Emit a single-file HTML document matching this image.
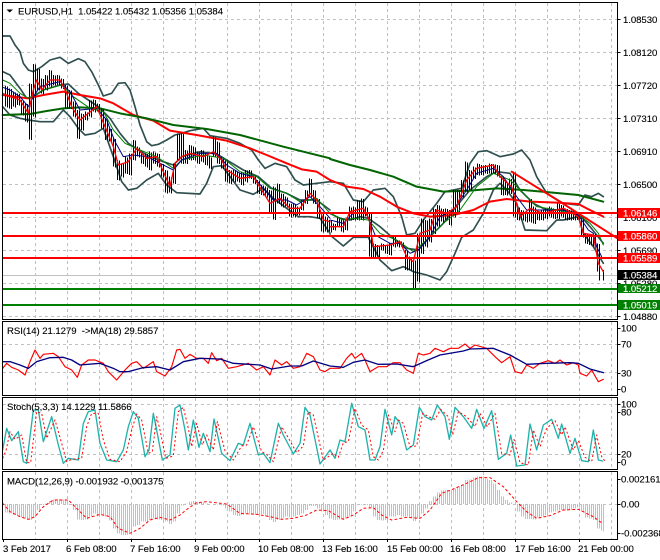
<!DOCTYPE html>
<html><head><meta charset="utf-8"><style>
html,body{margin:0;padding:0;background:#fff}
svg{display:block}
text{font-family:"Liberation Sans",sans-serif;font-size:9.6px;letter-spacing:-.06px;fill:#000;stroke:#000;stroke-width:.12px}
.g{stroke:#c0c0c0;stroke-width:1;stroke-dasharray:3 3;fill:none}
.f{fill:none;stroke-linejoin:round;stroke-linecap:round}
.bb{stroke:#2f4f4f;stroke-width:5}
.rt{stroke:#f00;stroke-width:6}
.gt{stroke:#006400;stroke-width:6}
.r1{stroke:#f00;stroke-width:4}
.n1{stroke:#000080;stroke-width:3}
.g1{stroke:#008000;stroke-width:3}
.bar{stroke:#000;stroke-width:3;fill:none;shape-rendering:crispEdges}
.hi{stroke:#c0c0c0;stroke-width:3;fill:none;shape-rendering:crispEdges}
text.w{fill:#fff;stroke:#fff}
</style></head><body>
<svg width="660" height="560" viewBox="0 0 660 560" xmlns="http://www.w3.org/2000/svg">
<rect width="660" height="560" fill="#fff"/>
<path class="g" d="M35.5 3V319M67.5 3V319M99.5 3V319M131.5 3V319M163.5 3V319M195.5 3V319M227.5 3V319M259.5 3V319M291.5 3V319M323.5 3V319M355.5 3V319M387.5 3V319M419.5 3V319M451.5 3V319M483.5 3V319M515.5 3V319M547.5 3V319M579.5 3V319M611.5 3V319"/>
<path class="g" d="M35.5 322V395M67.5 322V395M99.5 322V395M131.5 322V395M163.5 322V395M195.5 322V395M227.5 322V395M259.5 322V395M291.5 322V395M323.5 322V395M355.5 322V395M387.5 322V395M419.5 322V395M451.5 322V395M483.5 322V395M515.5 322V395M547.5 322V395M579.5 322V395M611.5 322V395"/>
<path class="g" d="M35.5 398V469M67.5 398V469M99.5 398V469M131.5 398V469M163.5 398V469M195.5 398V469M227.5 398V469M259.5 398V469M291.5 398V469M323.5 398V469M355.5 398V469M387.5 398V469M419.5 398V469M451.5 398V469M483.5 398V469M515.5 398V469M547.5 398V469M579.5 398V469M611.5 398V469"/>
<path class="g" d="M35.5 472V539M67.5 472V539M99.5 472V539M131.5 472V539M163.5 472V539M195.5 472V539M227.5 472V539M259.5 472V539M291.5 472V539M323.5 472V539M355.5 472V539M387.5 472V539M419.5 472V539M451.5 472V539M483.5 472V539M515.5 472V539M547.5 472V539M579.5 472V539M611.5 472V539"/>
<path class="g" d="M3 19.5H617M3 52.5H617M3 85.5H617M3 118.5H617M3 151.5H617M3 184.5H617M3 217.5H617M3 250.5H617M3 283.5H617M3 316.5H617M3 344.5H617M3 372.5H617M3 404.5H617M3 454.5H617M3 504.5H617"/>
<path d="M3 275.5H617" stroke="#c0c0c0" stroke-width="1"/>

<g transform="scale(.3333333333)">
<g class="f">
<path class="bb" d="M8 108L30 108L45 135L60 155L70 190L85 210L100 215L125 200L150 180L180 172L205 190L235 176L255 185L275 215L295 255L310 288L335 280L355 250L375 248L390 270L405 320L420 375L440 425L455 437L475 433L500 420L525 405L545 400L570 392L610 385L630 407L680 415L720 430L755 450L775 480L795 505L825 490L860 500L885 540L910 555L950 550L990 545"/>
<path class="bb" d="M8 215L30 225L60 265L80 295L100 290L130 270L180 255L205 252L235 280L265 300L295 320L330 355L360 400L385 430L415 450L450 470L490 485L520 495L545 470L600 455L650 462L680 480L730 510L775 530L815 565L860 580L900 600L950 600L990 630"/>
<path class="bb" d="M8 320L30 345L60 355L85 360L120 365L160 365L190 330L210 350L235 385L255 405L285 400L310 385L340 470L365 545L385 570L410 565L440 540L475 520L500 555L530 578L600 582L620 550L640 500L665 497L690 530L720 570L760 583L790 565L820 595L860 625L895 650L930 650L960 655L990 700"/>
<path class="rt" d="M8 285L60 292L85 295L130 285L190 275L240 285L300 295L340 310L400 345L460 362L510 392L590 405L680 422L750 445L800 465L860 490L905 508L950 515L990 540"/>
<path class="gt" d="M8 345L90 342L140 333L190 325L240 322L300 325L360 340L440 355L520 375L620 387L720 405L850 440L990 475"/>
</g>
<path id="b1" class="bar" d="M16 258V320M28 265V325M40 275V320M52 280V315M64 300V345M76 310V365M88 250V418M100 192V350M112 205V270M124 235V280M136 225V270M148 210V260M160 225V255M172 225V255M184 235V265M196 255V325M208 270V325M220 305V350M232 330V415M244 340V390M256 335V360M268 300V350M280 298V335M292 310V335M304 325V385M316 355V420M328 385V425M340 415V500M352 480V540M364 490V530M376 470V520M388 460V525M400 420V480M412 440V470M424 460V490M436 460V500M448 455V510M460 455V490M472 460V500M484 490V530M496 510V578M508 530V578M520 490V550M532 400V480M544 400V490M556 450V490M568 435V480M580 440V480M592 455V490M604 450V485M616 460V495M628 470V505M640 410V470M652 425V490M664 470V505M676 480V545M688 510V550M700 510V545M712 515V545M724 515V555M736 510V545M748 510V535M760 525V550M772 540V580M784 555V585M796 560V590M808 570V640M820 560V658M832 550V610M844 580V620M856 590V620M868 610V650M880 610V650M892 620V645M904 600V630M916 570V610M928 535V590M940 570V610M952 595V655M964 640V695M976 650V695"/>
<use href="#b1" transform="translate(6,2)"/>
<g class="f">
<path class="g1" d="M8 240L30 250L60 280L85 295L130 270L185 255L220 290L270 325L310 335L340 390L375 430L420 450L470 470L520 505L545 480L610 465L670 475L720 515L770 530L810 565L860 580L900 605L950 595L990 640"/>
<path class="n1" d="M8 262L30 270L60 290L85 320L100 290L120 260L180 245L210 275L240 330L290 325L320 360L345 425L370 470L400 465L440 470L480 490L520 510L545 480L600 460L650 460L680 495L720 520L760 530L790 565L820 600L860 600L890 615L930 590L960 620L990 655"/>
<path class="r1" d="M8 280L30 290L60 300L85 340L100 270L110 240L125 270L150 240L180 240L200 280L215 320L240 360L265 340L290 320L315 380L340 440L355 495L385 485L410 445L440 475L470 470L490 515L510 560L525 490L545 470L570 460L610 470L640 455L665 480L680 510L720 535L760 530L785 570L810 610L840 595L870 625L900 625L930 580L950 600L970 660L990 665"/>
</g>
<g transform="translate(990,0)">
<g class="f">
<path class="bb" d="M0 545L40 550L70 600L100 605L130 570L165 565L190 590L215 650L230 705L255 700L280 660L320 610L345 575L395 565L420 490L445 455L470 452L510 470L550 462L575 450L600 480L620 530L650 580L700 610L745 615L765 585L785 590L805 580L820 590"/>
<path class="bb" d="M0 640L30 655L60 660L90 650L115 655L150 680L190 715L230 745L265 750L300 710L340 670L370 630L420 570L470 530L500 515L540 520L570 570L610 610L650 630L700 630L745 640L780 680L820 730"/>
<path class="bb" d="M0 705L40 738L70 712L115 712L150 780L185 812L220 800L250 815L290 825L330 840L350 815L375 760L395 712L430 690L460 640L490 570L510 550L530 570L560 610L585 690L650 692L680 660L700 660L745 650L760 700L790 740L820 790"/>
<path class="rt" d="M0 540L50 560L100 567L150 590L200 620L250 640L300 650L370 645L430 630L480 605L530 597L600 605L680 608L745 612L770 625L820 650"/>
<path class="gt" d="M0 477L60 495L120 510L190 530L260 560L340 575L420 572L500 565L580 570L660 577L745 585L820 605"/>
</g>
<path id="b2" class="bar" d="M-2 660V695M10 670V690M22 650V680M34 655V695M46 660V690M58 620V660M70 620V660M82 600V660M94 595V660M106 620V650M118 640V770M130 730V772M142 735V770M154 730V750M166 735V760M178 730V765M190 705V740M202 720V740M214 725V740M226 750V810M238 770V810M250 780V868M262 700V845M274 655V760M286 660V740M298 655V725M310 625V700M322 615V680M334 625V665M346 625V660M358 630V675M370 570V650M382 570V640M394 540V590M406 485V575M418 510V570M430 500V535M442 490V525M454 495V525M466 495V520M478 490V520M490 492V520M502 495V530M514 530V585M526 545V585M538 535V580M550 515V650M562 620V660M574 630V660M586 640V665M598 595V665M610 620V670M622 635V660M634 630V660M646 625V655M658 620V650M670 625V655M682 610V655M694 615V650M706 625V660M718 630V660M730 635V660M742 640V660M754 650V710M766 700V730M778 705V735M790 700V740M802 730V815"/>
<use href="#b2" transform="translate(6,2)"/>
<path class="bar" d="M808 790V842M820 810V842"/>
<g class="f">
<path class="g1" d="M0 640L40 660L70 655L115 660L150 700L200 720L250 755L290 720L340 670L390 630L440 560L490 520L540 540L570 570L620 620L680 630L745 645L780 670L805 700L820 735"/>
<path class="n1" d="M0 660L40 670L70 640L110 640L135 705L180 730L210 730L240 760L265 750L300 710L330 650L370 630L410 570L440 520L490 505L520 530L560 590L590 630L650 630L700 630L745 645L775 690L790 700L800 740L815 770"/>
<path class="r1" d="M0 680L40 680L60 635L100 625L118 660L130 740L180 735L210 725L230 770L250 785L270 700L300 690L320 630L350 640L380 620L410 540L440 505L490 495L510 530L545 560L570 650L600 625L640 640L700 625L745 650L760 700L790 705L805 790L820 815"/>
<path class="rt" d="M545 515L690 605L862 715"/>
</g>
</g>
</g>

<path d="M3 213H617M3 236H617M3 258H617" stroke="#f00" stroke-width="2"/>
<path d="M3 289H617M3 305H617" stroke="#008000" stroke-width="2"/>

<!-- RSI -->
<g transform="translate(0,320) scale(.3333333333)">
<g class="f">
<path stroke="#f00" stroke-width="3.5" d="M8 145L20 130L35 142L55 150L75 165L90 125L105 90L120 115L130 103L160 100L175 110L195 140L215 150L232 172L245 135L265 120L285 120L310 130L325 155L350 180L375 150L395 130L410 125L430 145L460 125L470 155L495 168L515 140L530 90L540 88L555 115L570 103L590 115L610 115L625 130L635 98L650 122L665 115L685 145L710 140L745 130L770 150L790 140L810 165L825 120L845 135L860 125L880 145L900 140L920 100L940 110L960 150L975 155L990 145L1020 145L1040 115L1055 100L1065 115L1085 100L1095 120L1110 155L1135 140L1160 140L1180 128L1200 128L1220 150L1240 160L1255 100L1270 105L1290 100L1305 85L1330 95L1350 85L1375 85L1395 72L1410 85L1425 75L1460 85L1485 110L1505 128L1530 110L1545 155L1565 160L1580 135L1600 145L1620 130L1645 122L1665 130L1680 120L1700 135L1720 128L1735 135L1740 160L1760 168L1775 150L1795 185L1810 178"/>
<path stroke="#000080" stroke-width="4" d="M8 125L30 125L60 135L85 145L110 125L150 113L190 112L215 120L240 135L300 130L340 145L360 155L385 155L430 143L470 140L510 150L550 125L600 115L660 117L700 130L780 135L815 147L870 138L905 138L940 123L990 138L1030 142L1060 127L1095 120L1135 133L1190 132L1240 140L1280 122L1320 105L1390 93L1410 87L1480 85L1530 105L1580 133L1640 130L1710 128L1735 130L1770 147L1810 158"/>
</g>
</g>

<!-- Stoch -->
<g transform="translate(0,320) scale(.3333333333)">
<g class="f">
<path stroke="#20b2aa" stroke-width="4" d="M8 390L20 325L35 362L55 335L70 425L80 430L100 270L115 270L130 365L155 290L175 375L190 430L205 415L235 420L250 310L265 275L285 270L300 370L320 420L350 425L370 390L385 320L400 275L415 295L435 410L447 390L460 280L470 330L487 420L510 405L525 265L540 255L555 330L565 390L580 300L597 382L610 340L630 395L642 297L665 400L690 422L715 370L730 375L750 310L775 405L790 400L810 428L835 310L850 345L880 402L900 370L915 262L930 285L960 432L990 390L1005 415L1020 360L1035 365L1055 250L1075 320L1095 330L1110 420L1125 420L1140 380L1155 268L1175 345L1185 290L1200 310L1220 390L1240 375L1258 262L1275 290L1295 300L1312 255L1335 290L1348 358L1365 262L1390 290L1415 325L1430 268L1452 325L1475 272L1495 418L1520 400L1532 345L1550 438L1575 435L1590 312L1610 390L1630 315L1655 298L1675 355L1685 312L1710 400L1725 355L1745 422L1765 425L1780 330L1795 420L1808 423"/>
<path stroke="#f00" stroke-width="3" stroke-dasharray="6 7" stroke-linecap="butt" d="M8 415L18 392L30 335L45 358L65 345L80 428L92 428L110 275L125 280L140 355L165 300L185 370L200 425L215 418L245 415L260 320L275 280L295 280L310 360L330 418L360 425L380 395L395 330L410 282L425 300L445 400L457 395L470 290L480 330L497 415L520 408L535 275L550 262L565 325L575 380L590 310L607 375L620 345L640 390L652 305L675 392L700 420L725 378L740 375L760 320L785 395L800 403L820 425L845 320L860 345L890 398L910 378L925 275L940 285L970 420L1000 400L1015 412L1030 368L1045 365L1065 265L1085 315L1105 330L1120 410L1135 420L1150 392L1165 285L1185 335L1195 300L1210 310L1230 380L1250 378L1268 280L1285 290L1305 298L1322 268L1345 290L1358 345L1375 275L1400 290L1425 320L1440 280L1462 320L1485 280L1505 400L1530 405L1542 358L1560 428L1585 435L1600 330L1620 380L1640 325L1665 302L1685 345L1695 320L1720 390L1735 362L1755 412L1775 425L1790 345L1805 410L1816 425"/>
</g>
</g>

<!-- MACD -->
<g transform="translate(0,320) scale(.3333333333)">
<path id="h1" class="hi" d="M16 552V578M28 552V580M40 552V585M52 552V588M64 552V592M76 552V596M88 552V600M100 552V590M112 552V570M124 552V555M136 552V550M148 552V543M160 552V538M172 552V537M184 552V538M196 552V540M220 552V570M232 552V598M244 552V600M256 552V598M268 552V590M280 552V580M292 552V590M304 552V585M316 552V590M328 552V602M340 552V625M352 552V640M364 552V645M376 552V645M388 552V638M400 552V620M412 552V615M424 552V605M436 552V605M448 552V600M460 552V595M472 552V598M484 552V600M496 552V605M508 552V612M520 552V605M532 552V580M544 552V556M556 552V550M568 552V545M580 552V543M592 552V546M604 552V548M616 552V550M652 552V553M664 552V556M676 552V565M688 552V575M700 552V585M712 552V588M724 552V585M736 552V580M748 552V583M760 552V585M772 552V583M784 552V582M796 552V590M808 552V600M820 552V606M832 552V600M844 552V595M856 552V590M868 552V592M880 552V590M892 552V585M904 552V580M916 552V570M928 552V558M940 552V558M952 552V565M964 552V575M976 552V585M988 552V595"/>
<use href="#h1" transform="translate(6,0)"/>
<g transform="translate(990,0)">
<path id="h2" class="hi" d="M10 552V600M22 552V598M34 552V598M46 552V595M58 552V590M70 552V575M82 552V555M94 552V553M106 552V555M118 552V562M130 552V590M142 552V600M154 552V602M166 552V600M178 552V590M190 552V590M202 552V585M214 552V590M226 552V590M238 552V592M250 552V603M262 552V595M274 552V580M286 552V565M298 552V543M310 552V530M322 552V518M334 552V512M346 552V510M358 552V510M370 552V505M382 552V500M394 552V495M406 552V480M418 552V478M430 552V472M442 552V470M454 552V470M466 552V475M478 552V480M490 552V490M502 552V510M514 552V530M526 552V540M538 552V548M562 552V575M574 552V590M586 552V597M598 552V597M610 552V598M622 552V592M634 552V590M646 552V585M658 552V578M670 552V575M682 552V572M694 552V570M706 552V572M718 552V570M730 552V565M742 552V562M754 552V575M766 552V592M778 552V595M790 552V600M802 552V625"/>
<use href="#h2" transform="translate(6,0)"/>
<path class="hi" d="M814 552V632M820 552V634"/>
</g>
<path class="f" stroke="#f00" stroke-width="3" stroke-dasharray="6 9" stroke-linecap="butt" d="M8 550L30 575L60 590L85 598L105 590L130 560L160 540L205 540L230 565L260 595L300 583L330 590L355 625L390 640L420 625L450 600L480 592L510 600L540 585L565 565L590 548L620 545L680 552L720 580L770 583L810 590L845 598L880 595L920 585L950 570L985 572L1030 598L1060 585L1090 565L1120 563L1145 585L1175 600L1220 592L1260 595L1290 570L1325 520L1360 507L1400 490L1435 473L1470 473L1510 500L1550 545L1580 575L1610 595L1650 587L1690 570L1735 568L1780 590L1810 612"/>
</g>

<!-- frames -->
<g fill="none" stroke="#000" stroke-width="1">
<rect x="2.5" y="2.5" width="615" height="317"/>
<rect x="2.5" y="321.5" width="615" height="74"/>
<rect x="2.5" y="397.5" width="615" height="72"/>
<rect x="2.5" y="471.5" width="615" height="68"/>
</g>
<path stroke="#000" stroke-width="1" d="M617.5 19.5h3M617.5 52.5h3M617.5 85.5h3M617.5 118.5h3M617.5 151.5h3M617.5 184.5h3M617.5 217.5h3M617.5 250.5h3M617.5 283.5h3M617.5 316.5h3M617.5 328.5h3M617.5 344.5h3M617.5 373.5h3M617.5 389.5h3M617.5 404.5h3M617.5 412.5h3M617.5 454.5h3M617.5 462.5h3M617.5 479.5h3M617.5 504.5h3M617.5 533.5h3M3.5 539v3M67.5 539v3M131.5 539v3M195.5 539v3M259.5 539v3M323.5 539v3M387.5 539v3M451.5 539v3M515.5 539v3M579.5 539v3"/>

<!-- title -->
<path d="M6.5 9.5H13L9.7 12.5Z" fill="#000"/>
<text x="18" y="14.5" xml:space="preserve">EURUSD,H1  1.05422 1.05432 1.05356 1.05384</text>
<text x="7" y="334" xml:space="preserve">RSI(14) 21.1279  -&gt;MA(18) 29.5857</text>
<text x="7" y="410">Stoch(5,3,3) 14.1229 11.5866</text>
<text x="7" y="484.5">MACD(12,26,9) -0.001932 -0.001375</text>

<!-- price labels -->
<text x="623" y="23">1.08530</text>
<text x="623" y="56">1.08120</text>
<text x="623" y="89">1.07720</text>
<text x="623" y="122">1.07310</text>
<text x="623" y="155">1.06910</text>
<text x="623" y="188">1.06500</text>
<text x="623" y="221">1.06100</text>
<text x="623" y="254">1.05690</text>
<text x="623" y="287">1.05280</text>
<text x="623" y="320">1.04880</text>

<rect x="618" y="208" width="42" height="10" fill="#f00"/><text class="w" x="623" y="216.5">1.06146</text>
<rect x="618" y="231" width="42" height="10" fill="#f00"/><text class="w" x="623" y="239.5">1.05860</text>
<rect x="618" y="253" width="42" height="10" fill="#f00"/><text class="w" x="623" y="261.5">1.05589</text>
<rect x="618" y="270" width="42" height="10" fill="#000"/><text class="w" x="623" y="278.5">1.05384</text>
<rect x="618" y="284" width="42" height="9" fill="#008000"/><text class="w" x="623" y="292">1.05212</text>
<rect x="618" y="300" width="42" height="10" fill="#008000"/><text class="w" x="623" y="308.5">1.05019</text>

<text x="621" y="331.5">100</text>
<text x="621" y="347.5">70</text>
<text x="621" y="376.5">30</text>
<text x="621" y="392.5">0</text>
<text x="621" y="407.5">100</text>
<text x="621" y="415.5">80</text>
<text x="621" y="457.5">20</text>
<text x="621" y="465.5">0</text>
<text x="621" y="482.5">0.002161</text>
<text x="621" y="507.5">0.00</text>
<text x="621" y="536.5">-0.002368</text>

<!-- time labels -->
<text x="3" y="552">3 Feb 2017</text>
<text x="66" y="552">6 Feb 08:00</text>
<text x="130" y="552">7 Feb 16:00</text>
<text x="194" y="552">9 Feb 00:00</text>
<text x="258" y="552">10 Feb 08:00</text>
<text x="322" y="552">13 Feb 16:00</text>
<text x="387" y="552">15 Feb 00:00</text>
<text x="450" y="552">16 Feb 08:00</text>
<text x="515" y="552">17 Feb 16:00</text>
<text x="578" y="552">21 Feb 00:00</text>
</svg>
</body></html>
